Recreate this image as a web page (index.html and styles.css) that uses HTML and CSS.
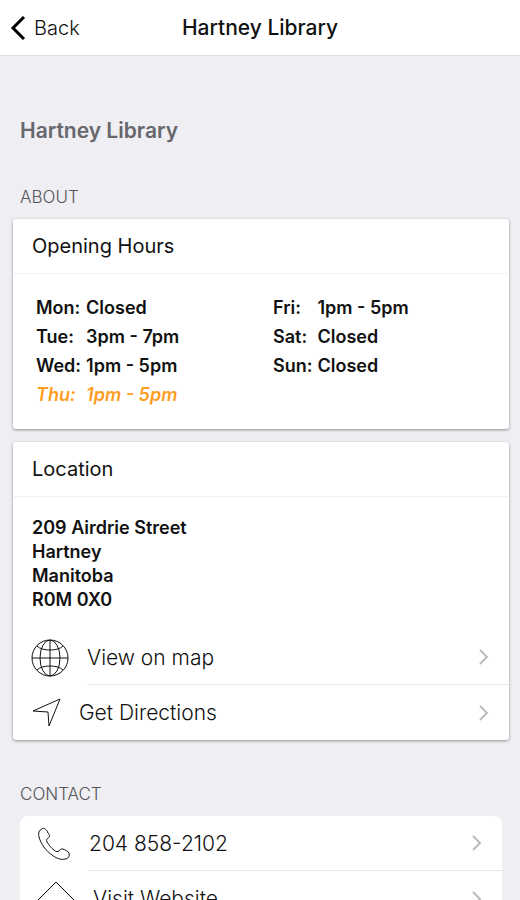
FILE: index.html
```html
<!DOCTYPE html>
<html lang="en">
<head>
    <meta charset="UTF-8">
    <meta name="viewport" content="width=device-width, initial-scale=1.0">
    <title>Hartney Library</title>
    <link rel="stylesheet" href="styles.css">
</head>
<body>
    <header class="navbar">
        <button type="button" class="back-btn">
            <svg class="back-icon" viewBox="0 0 16 24" aria-hidden="true"><path d="M14 1 3 12l11 11"/></svg>
            Back
        </button>
        <h1 class="navbar-title">Hartney Library</h1>
    </header>

    <main class="content">
        <h2 class="page-title">Hartney Library</h2>

        <h3 class="section-label">ABOUT</h3>

        <section class="card">
            <h4 class="card-header">Opening Hours</h4>
            <div class="hours">
                <table class="hours-table">
                    <tr><th scope="row">Mon:</th><td>Closed</td></tr>
                    <tr><th scope="row">Tue:</th><td>3pm - 7pm</td></tr>
                    <tr><th scope="row">Wed:</th><td>1pm - 5pm</td></tr>
                    <tr class="today"><th scope="row">Thu:</th><td>1pm - 5pm</td></tr>
                </table>
                <table class="hours-table">
                    <tr><th scope="row">Fri:</th><td>1pm - 5pm</td></tr>
                    <tr><th scope="row">Sat:</th><td>Closed</td></tr>
                    <tr><th scope="row">Sun:</th><td>Closed</td></tr>
                </table>
            </div>
        </section>

        <section class="card">
            <h4 class="card-header">Location</h4>
            <address class="address">
                209 Airdrie Street<br>
                Hartney<br>
                Manitoba<br>
                R0M 0X0
            </address>
            <a class="item" href="#map">
                <svg class="icon-globe" viewBox="0 0 38 38" aria-hidden="true">
                    <circle cx="19" cy="19" r="18"/>
                    <ellipse cx="19" cy="19" rx="10" ry="18"/>
                    <path d="M19 1v36M1 19h36M6 7c3 3 8 4 13 4s10-1 13-4M6 31c3-3 8-4 13-4s10 1 13 4"/>
                </svg>
                <span class="item-label">View on map<svg class="chevron" viewBox="0 0 10 16" aria-hidden="true"><path d="m1 1 7 7-7 7"/></svg></span>
            </a>
            <a class="item" href="#directions">
                <svg class="icon-arrow" viewBox="0 0 30 30" aria-hidden="true"><path d="M29 1 2 13l15 1 1 14z"/></svg>
                <span class="item-label">Get Directions<svg class="chevron" viewBox="0 0 10 16" aria-hidden="true"><path d="m1 1 7 7-7 7"/></svg></span>
            </a>
        </section>

        <h3 class="section-label">CONTACT</h3>

        <section class="list">
            <a class="item" href="tel:2048582102">
                <svg class="icon-phone" viewBox="0 0 34 34" aria-hidden="true">
                    <path d="M5 2C2 3 1 6 2 10c2 7 7 14 13 18 5 4 10 5 13 4 3 0 5-3 4-6-1-2-4-3-6-4-2 0-3 0-4 2-1 1-3 1-5-1-3-2-5-5-7-8-1-2 0-3 1-4 2-1 2-3 0-5C10 3 7 0 5 2z"/>
                </svg>
                <span class="item-label">204 858-2102<svg class="chevron" viewBox="0 0 10 16" aria-hidden="true"><path d="m1 1 7 7-7 7"/></svg></span>
            </a>
            <a class="item" href="#website">
                <svg class="icon-home" viewBox="0 0 38 38" aria-hidden="true"><path d="M6 36V24H1v-4L19 2l18 18v4h-5v12h-9V25h-8v11z"/></svg>
                <span class="item-label">Visit Website<svg class="chevron" viewBox="0 0 10 16" aria-hidden="true"><path d="m1 1 7 7-7 7"/></svg></span>
            </a>
        </section>
    </main>
</body>
</html>
```

FILE: styles.css
```css
* {
    box-sizing: border-box;
}
body {
    display: flex;
    flex-direction: column;
    height: 100vh;
    margin: 0;
    font-family: Inter, "Liberation Sans", sans-serif;
    font-size: 21px;
    color: #111;
    background-color: #eeeef3;
}
h1, h2, h3, h4 {
    margin: 0;
}
svg {
    flex: none;
    fill: none;
    stroke: #111;
}

/* Top bar */
.navbar {
    display: grid;
    grid-template-columns: 1fr auto 1fr;
    align-items: center;
    flex: none;
    height: 56px;
    padding: 0 10px;
    background-color: #fff;
    border-bottom: 1px solid #dfdfe2;
}
.back-btn {
    display: flex;
    align-items: center;
    gap: 8px;
    padding: 0;
    border: none;
    background: none;
    font: inherit;
    font-size: 20px;
    font-weight: 300;
    color: #111;
    cursor: pointer;
}
.back-icon {
    width: 16px;
    height: 24px;
    stroke: #000;
    stroke-width: 3;
}
.navbar-title {
    font-size: 21px;
    font-weight: 500;
}

/* Scrolling content */
.content {
    flex: 1;
    min-height: 0;
    overflow-y: auto;
    scrollbar-width: none;
    padding: 60px 11px 20px 13px;
}
.page-title {
    margin-bottom: 10px;
    padding: 0 7px;
    font-size: 21px;
    font-weight: 600;
    line-height: 30px;
    color: #67676c;
}
.section-label {
    padding: 29px 7px 10px;
    font-size: 17px;
    font-weight: 300;
    line-height: 24px;
    color: #55555a;
}

.card {
    margin-bottom: 13px;
    background-color: #fff;
    border-radius: 3px;
    box-shadow: 0 1px 3px rgba(0, 0, 0, 0.4);
}
.card-header {
    padding: 12px 19px;
    font-size: 20px;
    font-weight: 400;
    line-height: 30px;
    border-bottom: 1px solid #f2f2f3;
}

.hours {
    display: grid;
    grid-template-columns: 1fr 1fr;
    align-items: start;
    padding: 19px 11px 20px;
}
.hours-table {
    margin: 0 12px;
    border-collapse: collapse;
    justify-self: start;
    font-size: 18px;
    line-height: 29px;
}
.hours-table th,
.hours-table td {
    padding: 0;
    text-align: left;
    font-weight: 600;
}
.hours-table th {
    padding-right: 5px;
}
.today {
    color: #ff9d1e;
    font-style: italic;
}

.address {
    padding: 19px 19px 18px;
    font-size: 18px;
    font-style: normal;
    font-weight: 600;
    line-height: 24px;
}

/* Tappable rows */
.item {
    display: flex;
    align-items: center;
    gap: 18px;
    padding-left: 18px;
    color: inherit;
    font-weight: 300;
    text-decoration: none;
}
.item-label {
    display: flex;
    flex: 1;
    align-items: center;
    justify-content: space-between;
    height: 55px;
    padding-right: 20px;
    border-bottom: 1px solid #e6e6e8;
}
.item:last-child .item-label {
    border-bottom: none;
}
.icon-globe,
.icon-home {
    width: 38px;
    height: 38px;
}
.icon-arrow {
    width: 30px;
    height: 30px;
}
.icon-phone {
    width: 34px;
    height: 34px;
}
.chevron {
    width: 10px;
    height: 16px;
    stroke: #bbb;
    stroke-width: 2;
}
.list {
    margin: 0 7px;
    background-color: #fff;
    border-radius: 8px;
}
.list .item {
    padding-left: 17px;
}
```
